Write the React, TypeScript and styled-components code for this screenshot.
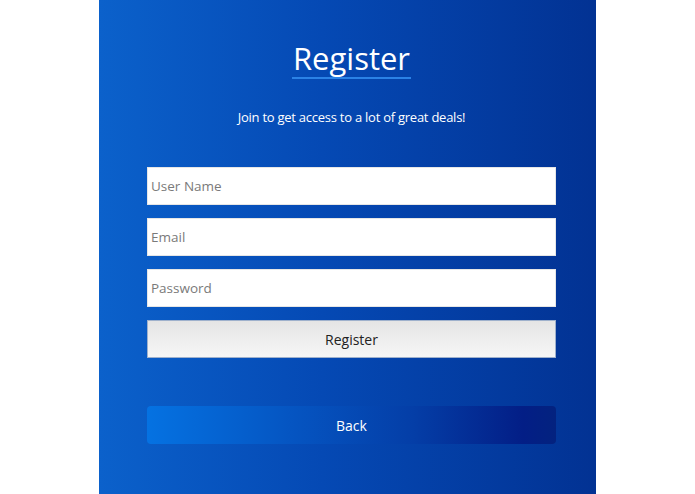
import React from "react";
import styled, { createGlobalStyle } from "styled-components";

const Global = createGlobalStyle`
  html, body { margin: 0; padding: 0; background: #ffffff; }
  body { font-family: "Open Sans", "Noto Sans", sans-serif; }
  * { box-sizing: border-box; }
`;

const Page = styled.div`
  display: flex;
  justify-content: center;
  height: 494px;
`;

const Panel = styled.main`
  width: 497px;
  height: 494px;
  background: linear-gradient(90deg, #0b61cb 0%, #0549b4 45%, #023293 100%);
  padding: 39px 40px 0 48px;
  display: flex;
  flex-direction: column;
  align-items: center;
`;

const Title = styled.h1`
  margin: 0;
  font-size: 31px;
  font-weight: 500;
  color: #ffffff;
  line-height: 38px;
  padding: 0 1px;
  border-bottom: 2px solid #2b82e6;
`;

const Subtitle = styled.p`
  margin: 29px 0 0;
  font-size: 13px;
  font-weight: 500;
  color: #ffffff;
  line-height: 18px;
  letter-spacing: -0.25px;
`;

const Form = styled.form`
  width: 100%;
  margin-top: 41px;
  display: flex;
  flex-direction: column;
  gap: 13px;
`;

const Field = styled.input`
  width: 100%;
  height: 38px;
  border: 1px solid #e6e6e6;
  background: #ffffff;
  padding: 0 3px;
  font-family: "Open Sans", "Noto Sans", sans-serif;
  font-size: 13.5px;
  color: #333;
  outline: none;
  &::placeholder { color: #7a7a7a; }
`;

const SubmitButton = styled.button`
  width: 100%;
  height: 38px;
  border: 1px solid #9fb1cc;
  background: linear-gradient(180deg, #e5e5e5 0%, #f6f6f6 100%);
  font-family: "Open Sans", "Noto Sans", sans-serif;
  font-size: 14px;
  color: #222;
  padding: 0;
`;

const BackButton = styled.button`
  width: 100%;
  height: 38px;
  margin-top: 48px;
  border: none;
  border-radius: 4px;
  background: linear-gradient(90deg, #0572e2 0%, #0555c2 35%, #043ea7 65%, #031e86 92%, #03227f 100%);
  color: #ffffff;
  font-family: "Open Sans", "Noto Sans", sans-serif;
  font-size: 14px;
  padding: 0;
`;

export default function App() {
  return (
    <Page>
      <Global />
      <Panel>
        <Title>Register</Title>
        <Subtitle>Join to get access to a lot of great deals!</Subtitle>
        <Form onSubmit={(e) => e.preventDefault()}>
          <Field placeholder="User Name" />
          <Field placeholder="Email" />
          <Field placeholder="Password" type="password" />
          <SubmitButton type="submit">Register</SubmitButton>
        </Form>
        <BackButton type="button">Back</BackButton>
      </Panel>
    </Page>
  );
}
